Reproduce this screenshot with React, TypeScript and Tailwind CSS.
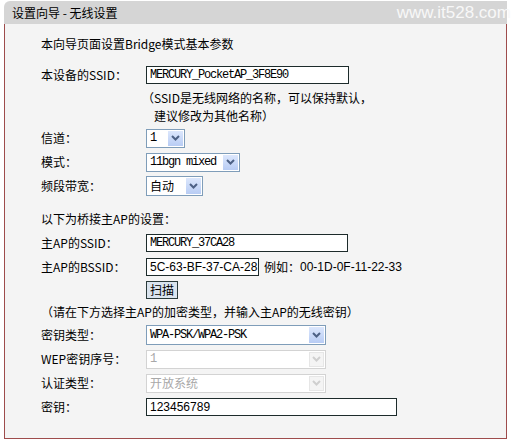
const cjk = "font-['Noto_Sans_CJK_SC','Noto_Sans',sans-serif]";
const mono = "font-['Liberation_Mono','DejaVu_Sans_Mono',monospace] text-[12px] tracking-[-1.2px]";

function Chevron({ disabled }: { disabled?: boolean }) {
  return (
    <svg width="9" height="6" viewBox="0 0 9 6">
      <path
        d="M1 1 L4.5 4.5 L8 1"
        fill="none"
        stroke={disabled ? "#cfcfcf" : "#4d6185"}
        strokeWidth="2"
      />
    </svg>
  );
}

function Select({
  value,
  width,
  height = "h-[19px]",
  disabled,
  cjkText,
}: {
  value: string;
  width: string;
  height?: string;
  disabled?: boolean;
  cjkText?: boolean;
}) {
  return (
    <div
      className={`flex ${width} ${height} items-stretch border bg-white ${
        disabled ? "border-[#d3d3d3]" : "border-[#7f9db9]"
      }`}
    >
      <span
        className={`flex flex-1 items-center pl-[3px] ${
          cjkText ? `${cjk} text-[12px]` : mono
        } ${disabled ? "text-[#a8a8a8]" : "text-black"}`}
      >
        {value}
      </span>
      <span
        className={`m-px flex w-[15px] items-center justify-center ${
          disabled
            ? "border border-[#e6e6e6] bg-[#f4f4f4]"
            : "bg-gradient-to-b from-[#dce7fc] to-[#b8ccf4]"
        }`}
      >
        <Chevron disabled={disabled} />
      </span>
    </div>
  );
}

function Input({
  value,
  width,
  sans,
}: {
  value: string;
  width: string;
  sans?: boolean;
}) {
  return (
    <div
      className={`flex ${width} h-[18px] items-center border border-[#1d2b2b] bg-white pl-[3px] ${
        sans ? "font-['Liberation_Sans',sans-serif] text-[12px]" : mono
      } text-black`}
    >
      {value}
    </div>
  );
}

function Row({
  label,
  children,
  h = "h-6",
}: {
  label?: string;
  children?: React.ReactNode;
  h?: string;
}) {
  return (
    <div className={`flex ${h} items-center`}>
      <div className="w-[105px] shrink-0">{label}</div>
      <div className="flex items-center">{children}</div>
    </div>
  );
}

export default function App() {
  return (
    <div className={`h-[443px] w-[511px] overflow-hidden bg-white text-[12px] text-black ${cjk}`}>
      <div className="ml-[4px] mr-[4px] mt-px">
        <div className="flex h-[23px] items-center justify-between rounded-tl-[6px] bg-[#d5d5d5] pl-[8px]">
          <span className="leading-none">设置向导 - 无线设置</span>
          <span className="mr-[-4px] font-['Liberation_Sans',sans-serif] text-[17px] leading-none text-[#f8f8f8]">
            www.it528.com
          </span>
        </div>
        <div className="flex h-[415px] flex-col border-x border-b border-[#9e4c4c] bg-[#f4f4f4] pl-[36px] pt-[8px]">
          <div className="flex h-6 items-center">本向导页面设置Bridge模式基本参数</div>
          <div className="mt-[7px]">
            <Row label="本设备的SSID：">
              <Input value="MERCURY_PocketAP_3F8E90" width="w-[203px]" />
            </Row>
          </div>
          <div className="mt-[2px] pl-[105px] leading-[18px]">
            <div className="ml-[-4px]">（SSID是无线网络的名称，可以保持默认，</div>
            <div className="pl-[8px]">建议修改为其他名称）</div>
          </div>
          <div className="mt-px">
            <Row label="信道：">
              <Select value="1" width="w-[39px]" />
            </Row>
            <Row label="模式：">
              <Select value="11bgn mixed" width="w-[94px]" />
            </Row>
            <Row label="频段带宽：">
              <Select value="自动" width="w-[57px]" height="h-[20px]" cjkText />
            </Row>
          </div>
          <div className="mt-[9px] flex h-6 items-center">以下为桥接主AP的设置：</div>
          <Row label="主AP的SSID：">
            <Input value="MERCURY_37CA28" width="w-[202px]" />
          </Row>
          <Row label="主AP的BSSID：">
            <Input value="5C-63-BF-37-CA-28" width="w-[113px]" sans />
            <span className="ml-[5px]">例如：</span>
            <span className="font-['Liberation_Sans',sans-serif] text-[12px]">
              00-1D-0F-11-22-33
            </span>
          </Row>
          <Row h="h-[22px]">
            <button className="flex h-[18px] items-center border border-[#2a3a3a] bg-[#dae4ee] px-[3px] leading-none">
              扫描
            </button>
          </Row>
          <div className="flex h-[22px] items-center">
            （请在下方选择主AP的加密类型，并输入主AP的无线密钥）
          </div>
          <Row label="密钥类型：">
            <Select value="WPA-PSK/WPA2-PSK" width="w-[180px]" height="h-[20px]" />
          </Row>
          <Row label="WEP密钥序号：">
            <Select value="1" width="w-[180px]" disabled />
          </Row>
          <Row label="认证类型：">
            <Select value="开放系统" width="w-[180px]" disabled cjkText />
          </Row>
          <Row label="密钥：">
            <Input value="123456789" width="w-[251px]" sans />
          </Row>
        </div>
      </div>
    </div>
  );
}
